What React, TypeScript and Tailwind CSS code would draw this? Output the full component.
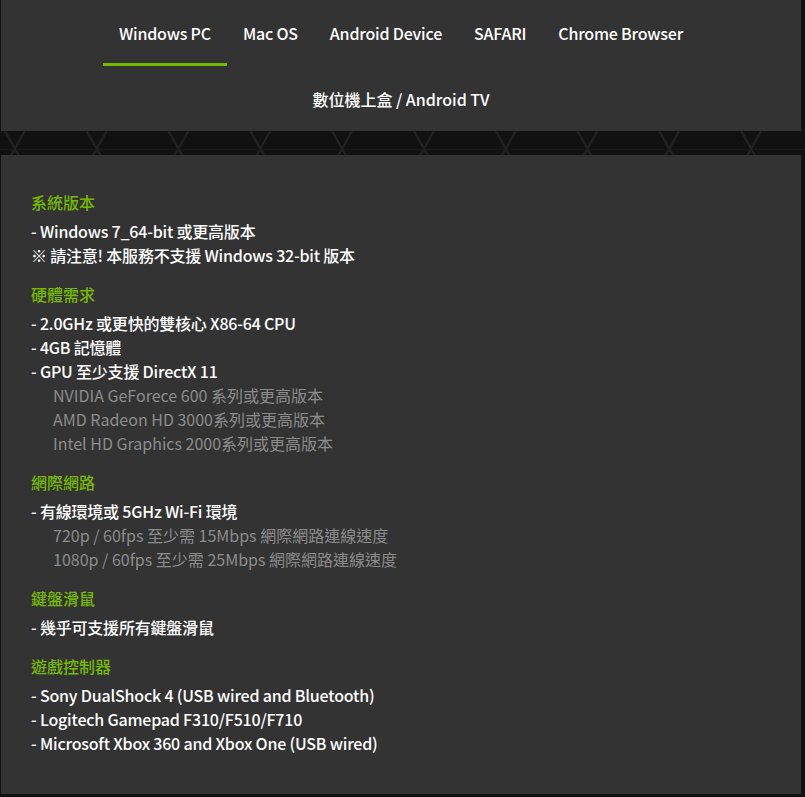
import React from "react";

const tabs = ["Windows PC", "Mac OS", "Android Device", "SAFARI", "Chrome Browser"];

type Line = { text: string; sub?: boolean };
type Section = { title: string; lines: Line[] };

const sections: Section[] = [
  {
    title: "系統版本",
    lines: [
      { text: "- Windows 7_64-bit 或更高版本" },
      { text: "※ 請注意! 本服務不支援 Windows 32-bit 版本" },
    ],
  },
  {
    title: "硬體需求",
    lines: [
      { text: "- 2.0GHz 或更快的雙核心 X86-64 CPU" },
      { text: "- 4GB 記憶體" },
      { text: "- GPU 至少支援 DirectX 11" },
      { text: "NVIDIA GeForece 600 系列或更高版本", sub: true },
      { text: "AMD Radeon HD 3000系列或更高版本", sub: true },
      { text: "Intel HD Graphics 2000系列或更高版本", sub: true },
    ],
  },
  {
    title: "網際網路",
    lines: [
      { text: "- 有線環境或 5GHz Wi-Fi 環境" },
      { text: "720p / 60fps 至少需 15Mbps 網際網路連線速度", sub: true },
      { text: "1080p / 60fps 至少需 25Mbps 網際網路連線速度", sub: true },
    ],
  },
  {
    title: "鍵盤滑鼠",
    lines: [{ text: "- 幾乎可支援所有鍵盤滑鼠" }],
  },
  {
    title: "遊戲控制器",
    lines: [
      { text: "- Sony DualShock 4 (USB wired and Bluetooth)" },
      { text: "- Logitech Gamepad F310/F510/F710" },
      { text: "- Microsoft Xbox 360 and Xbox One (USB wired)" },
    ],
  },
];

// honeycomb-ish texture strip between the two panels
const Texture = () => (
  <svg className="block h-full w-full" preserveAspectRatio="none">
    <defs>
      <pattern id="hex" x="-67" y="0" width="81.8" height="24" patternUnits="userSpaceOnUse">
        <path d="M72 0 L82 18 L92 0" fill="none" stroke="#232323" strokeWidth="2" />
        <path d="M82 18 L78 24 M82 18 L86 24" fill="none" stroke="#232323" strokeWidth="2" />
        <path d="M0 18.5 H164" stroke="#191919" strokeWidth="1" />
        <path d="M-10 0 L0 18 L10 0" fill="none" stroke="#232323" strokeWidth="2" />
        <path d="M0 18 L-4 24 M0 18 L4 24" fill="none" stroke="#232323" strokeWidth="2" />
      </pattern>
    </defs>
    <rect width="100%" height="100%" fill="url(#hex)" />
  </svg>
);

export default function App() {
  return (
    <div
      className="min-h-screen w-[805px] bg-[#111111] pb-[2px]"
      style={{ fontFamily: '"Noto Sans CJK TC", "Noto Sans", sans-serif' }}
    >
      <div className="ml-[1px] w-[800px] bg-[#333333]">
        <div className="flex justify-center">
          {tabs.map((t, i) => (
            <div
              key={t}
              className={`px-4 pt-[22px] pb-[19px] text-[16px] leading-[22px] font-medium tracking-[-0.2px] text-white border-b-[3px] ${
                i === 0 ? "border-[#76b900]" : "border-transparent"
              }`}
            >
              {t}
            </div>
          ))}
        </div>
        <div className="flex justify-center">
          <div className="px-4 pt-[22px] pb-[18px] text-[16px] leading-[22px] font-medium text-white border-b-[3px] border-transparent">
            數位機上盒 / Android TV
          </div>
        </div>
      </div>

      <div className="h-[24px] w-full">
        <Texture />
      </div>

      <div className="ml-[1px] w-[800px] bg-[#333333] px-[30px] pt-[35px] pb-[39px]">
        {sections.map((s, i) => (
          <div key={s.title} className={i > 0 ? "mt-[15px]" : ""}>
            <div className="text-[16px] leading-[24px] font-medium text-[#76b900]">{s.title}</div>
            <div className="mt-[5px]">
              {s.lines.map((l) => (
                <div
                  key={l.text}
                  className={
                    l.sub
                      ? "pl-[22px] text-[16px] leading-[24px] font-normal text-[#8c8c8c]"
                      : "text-[16px] leading-[24px] font-medium tracking-[-0.2px] text-white"
                  }
                >
                  {l.text}
                </div>
              ))}
            </div>
          </div>
        ))}
      </div>
    </div>
  );
}
